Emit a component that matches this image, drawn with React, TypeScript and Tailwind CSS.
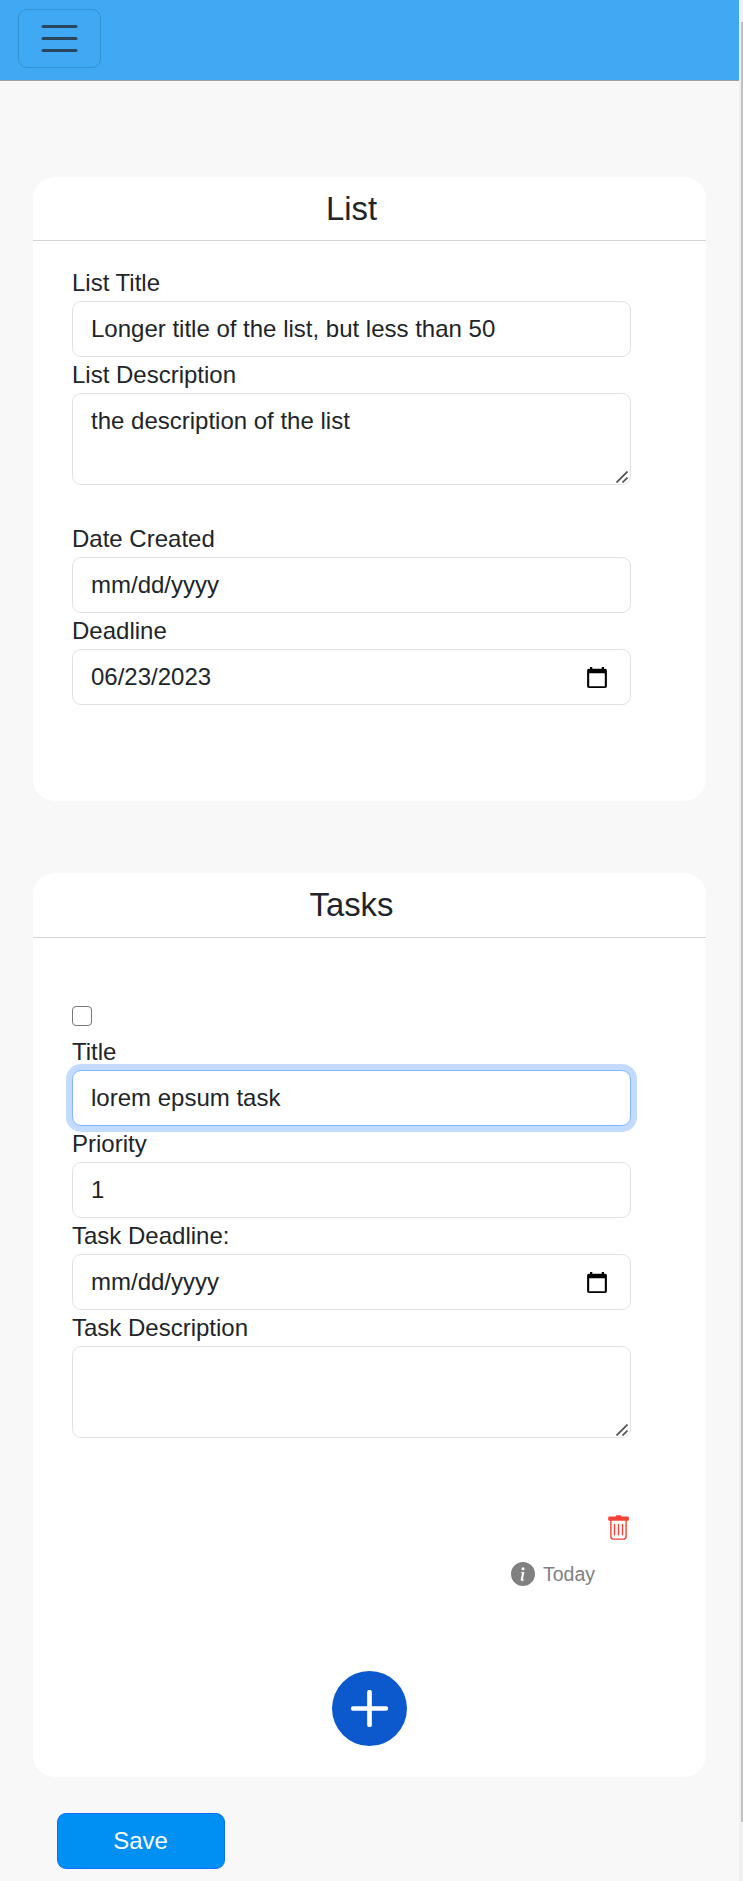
import { useState } from "react";
import type { ReactNode } from "react";
import { BsInfoCircleFill } from "react-icons/bs";

const control =
  "block w-full rounded-[9px] border border-[#dee2e6] bg-white px-[18px] text-[24px] leading-[36px] text-[#212529] outline-none";

function CalendarIcon() {
  return (
    <svg className="h-[21px] w-[20px]" viewBox="0 0 20 21" aria-hidden="true">
      <path
        fillRule="evenodd"
        fill="#000"
        d="M3 0h2.300V1.700h9.400V0H17V1.700h1.200q1.700 0 1.700 1.700v15.900q0 1.700-1.700 1.700H1.800q-1.700 0-1.700-1.700V3.400Q0.100 1.700 1.800 1.700H3ZM2.200 6.300V19.200h15.600V6.300Z"
      />
    </svg>
  );
}

function TrashIcon() {
  return (
    <svg className="h-[25px] w-[21px] text-[#f44336]" viewBox="0 0 21 25" aria-hidden="true">
      <path
        fill="currentColor"
        d="M8.700 0.200h3.800q.9 0 .9 1.200h6.200q1.300 0 1.300 1.300v1.800q0 1.300-1.300 1.300H1.500Q0.200 5.800 0.200 4.500V2.700Q0.200 1.400 1.500 1.400h6.300q0-1.200.9-1.200Z"
      />
      <path
        fill="none"
        stroke="currentColor"
        strokeWidth="1.400"
        strokeLinecap="round"
        d="M2.900 5.500V21.600q0 2.500 2.500 2.500H15.600q2.500 0 2.500-2.500V5.500M6.500 9.500V19.800M10.500 9.500V19.800M14.500 9.500V19.800"
      />
    </svg>
  );
}

function Field({ label, children }: { label: string; children: ReactNode }) {
  return (
    <label className="block">
      <span className="block h-[36px] leading-[36px]">{label}</span>
      {children}
    </label>
  );
}

function TextField({ label, value, focused }: { label: string; value: string; focused?: boolean }) {
  const [text, setText] = useState(value);
  return (
    <Field label={label}>
      <input
        className={
          focused
            ? "block h-[56px] w-full rounded-[9px] border border-[#86b7fe] bg-white px-[18px] text-[24px] leading-[36px] text-[#212529] shadow-[0_0_0_6px_#c2dbff] outline-none"
            : control + " h-[56px]"
        }
        value={text}
        onChange={(e) => setText(e.target.value)}
      />
    </Field>
  );
}

function DateField({ label, value, picker }: { label: string; value: string; picker?: boolean }) {
  return (
    <Field label={label}>
      <span className="flex h-[56px] w-full items-center justify-between rounded-[9px] border border-[#dee2e6] bg-white pr-[23px] pl-[18px]">
        <span>{value}</span>
        {picker && <CalendarIcon />}
      </span>
    </Field>
  );
}

function AreaField({ label, value }: { label: string; value: string }) {
  const [text, setText] = useState(value);
  return (
    <Field label={label}>
      <span className="relative block">
        <textarea
          className={control + " h-[92px] resize-none py-[9px]"}
          value={text}
          onChange={(e) => setText(e.target.value)}
        />
        <svg className="absolute right-[3px] bottom-[2px] h-[12px] w-[12px]" viewBox="0 0 12 12" aria-hidden="true">
          <path d="M0.500 11.500 11.500 0.500M6.500 11.500 11.500 6.500" stroke="#505050" strokeWidth="1.700" fill="none" />
        </svg>
      </span>
    </Field>
  );
}

function Card({ title, className, children }: { title: string; className: string; children: ReactNode }) {
  return (
    <section className={className}>
      <h4 className="pt-[12px] pr-[36px] text-center text-[32.8px] leading-[39px]">{title}</h4>
      <div className="h-px bg-[#d3d3d3]" />
      {children}
    </section>
  );
}

export default function App() {
  return (
    <div className="flex h-[1881px] w-full overflow-hidden bg-[#f8f8f8] font-['Liberation_Sans',Arial,sans-serif] text-[24px] leading-[36px] text-[#212529]">
      <div className="flex min-w-0 flex-1 flex-col">
        <nav className="flex h-[81px] shrink-0 items-start border-b border-[#a0a0a0] bg-[#3fa9f3] pt-[9px] pl-[18px]">
          <button
            aria-label="Menu"
            className="flex h-[59px] w-[83px] items-center justify-center rounded-[9px] border border-[#3591d0]"
          >
            <svg className="h-[45px] w-[45px]" viewBox="0 0 30 30" aria-hidden="true">
              <path
                d="M4 7h22M4 15h22M4 23h22"
                stroke="rgba(33,37,41,0.75)"
                strokeLinecap="round"
                strokeMiterlimit="10"
                strokeWidth="2"
              />
            </svg>
          </button>
        </nav>

        <Card
          title="List"
          className="mx-[33px] mt-[96px] grid h-[624px] shrink-0 grid-rows-[63px_1px_1fr] rounded-[22px] bg-white"
        >
          <div className="pt-[24px] pr-[75px] pl-[39px]">
            <TextField label="List Title" value="Longer title of the list, but less than 50" />
            <AreaField label="List Description" value="the description of the list" />
            <div className="mt-[36px]">
              <DateField label="Date Created" value="mm/dd/yyyy" />
              <DateField label="Deadline" value="06/23/2023" picker />
            </div>
          </div>
        </Card>

        <Card
          title="Tasks"
          className="mx-[33px] mt-[72px] grid h-[904px] shrink-0 grid-rows-[64px_1px_1fr] rounded-[22px] bg-white"
        >
          <div className="flex flex-col">
            <div className="pt-[68px] pr-[75px] pl-[39px]">
              <input
                type="checkbox"
                aria-label="Done"
                className="mb-[8px] block h-[20px] w-[20px] appearance-none rounded-[4px] border-[1.500px] border-[#767676] bg-white"
              />
              <TextField label="Title" value="lorem epsum task" focused />
              <TextField label="Priority" value="1" />
              <DateField label="Task Deadline:" value="mm/dd/yyyy" picker />
              <AreaField label="Task Description" value="" />
            </div>
            <div className="mt-[77px] flex h-[26px] justify-end pr-[77px]">
              <TrashIcon />
            </div>
            <div className="mt-[21px] flex h-[24px] items-center justify-end gap-[8px] pr-[111px] text-[19.500px] leading-[24px] text-[#808080]">
              <BsInfoCircleFill className="h-[24px] w-[24px]" />
              <span>Today</span>
            </div>
            <button
              aria-label="Add task"
              className="mt-[85px] mr-px flex h-[75px] w-[75px] items-center justify-center self-center rounded-full bg-[#0b59cd]"
            >
              <svg className="h-[37px] w-[37px]" viewBox="0 0 37 37" aria-hidden="true">
                <path d="M18.500 2.200V34.800M2.200 18.500H34.800" stroke="#fff" strokeWidth="4.700" strokeLinecap="round" />
              </svg>
            </button>
          </div>
        </Card>

        <button className="mt-[36px] ml-[57px] h-[56px] w-[168px] shrink-0 rounded-[9px] border border-[#0d6efd] bg-[#0090f3] pr-px text-white">
          Save
        </button>
      </div>
      <div className="flex w-[4px] shrink-0 justify-end bg-[#f0f0f0] pt-[22px]">
        <div className="h-[1800px] w-[2px] bg-[#c1c1c1]" />
      </div>
    </div>
  );
}
